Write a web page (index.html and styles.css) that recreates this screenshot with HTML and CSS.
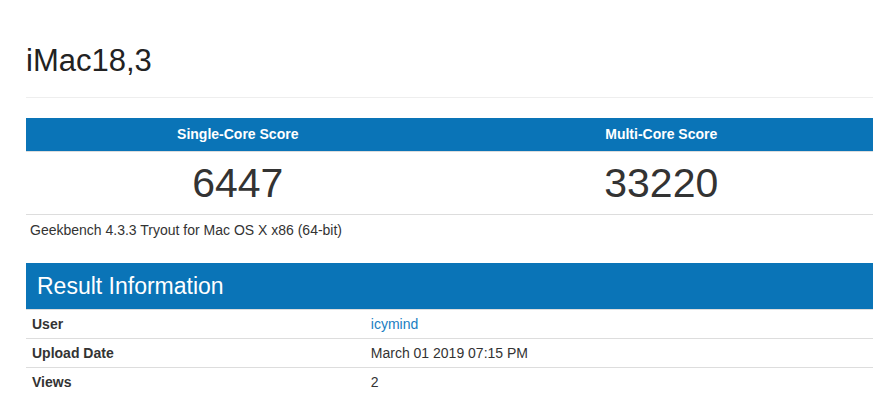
FILE: index.html
```html
<!DOCTYPE html>
<html>
<head>
<meta charset="utf-8">
<link rel="stylesheet" href="styles.css">
<title>iMac18,3 - Geekbench</title>
</head>
<body>
<div class="page">
  <h1 class="title">iMac18,3</h1>

  <div class="scores">
    <div class="score-head">Single-Core Score</div>
    <div class="score-head">Multi-Core Score</div>
    <div class="score-val">6447</div>
    <div class="score-val">33220</div>
  </div>
  <div class="version">Geekbench 4.3.3 Tryout for Mac OS X x86 (64-bit)</div>

  <div class="section-head">Result Information</div>
  <div class="info">
    <div class="info-row">
      <div class="info-label">User</div>
      <div class="info-value"><a class="link" href="#">icymind</a></div>
    </div>
    <div class="info-row">
      <div class="info-label">Upload Date</div>
      <div class="info-value">March 01 2019 07:15 PM</div>
    </div>
    <div class="info-row last">
      <div class="info-label">Views</div>
      <div class="info-value">2</div>
    </div>
  </div>
</div>
</body>
</html>
```

FILE: styles.css
```css
html, body {
  margin: 0;
  padding: 0;
  background: #fff;
}

body {
  font-family: "Liberation Sans", Arial, Helvetica, sans-serif;
  color: #333;
  font-size: 14px;
}

.page {
  padding: 0 6px 0 26px;
}

.title {
  margin: 44px 0 0 0;
  padding: 0 0 20px 0;
  font-size: 31px;
  font-weight: normal;
  line-height: 33px;
  color: #222;
  border-bottom: 1px solid #eee;
}

.scores {
  margin-top: 20px;
  display: grid;
  grid-template-columns: 1fr 1fr;
}

.score-head {
  background: #0a74b7;
  color: #fff;
  font-weight: bold;
  font-size: 14px;
  height: 33px;
  line-height: 33px;
  text-align: center;
  border-bottom: 1px solid #ddd;
}

.score-val {
  height: 62px;
  line-height: 62px;
  text-align: center;
  font-size: 41px;
  color: #333;
  border-bottom: 1px solid #ddd;
}

.version {
  padding: 6px 4px 0 4px;
  line-height: 18px;
  height: 18px;
}

.section-head {
  margin-top: 24px;
  background: #0a74b7;
  color: #fff;
  font-size: 23px;
  height: 46px;
  line-height: 46px;
  padding-left: 11px;
  border-bottom: 1px solid #ddd;
}

.info-row {
  display: grid;
  grid-template-columns: 40% 60%;
  height: 28px;
  line-height: 28px;
  border-bottom: 1px solid #ddd;
}

.info-row.last {
  border-bottom: none;
}

.info-label {
  font-weight: bold;
  padding-left: 6px;
}

.info-value {
  padding-left: 6px;
}

.link {
  color: #1a7ec2;
  text-decoration: none;
}
```
